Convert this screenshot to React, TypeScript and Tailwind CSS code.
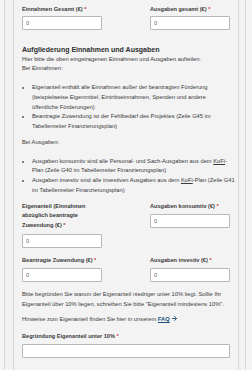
import { ArrowRight } from "lucide-react";

function Label({ children }: { children: React.ReactNode }) {
  return (
    <label className="block text-[5.6px] font-semibold leading-[9.6px] text-[#3a3a3a]">
      {children} <span className="text-[#c0392b]">*</span>
    </label>
  );
}

function Field({ value = "0", wide = false }: { value?: string; wide?: boolean }) {
  return (
    <input
      readOnly
      value={value}
      className={`block h-[14px] rounded-[1px] border border-[#b9b9b9] bg-white px-[3px] text-[5.6px] text-[#666] outline-none ${
        wide ? "w-full" : "w-[80px]"
      }`}
    />
  );
}

export default function App() {
  return (
    <div className="h-[370px] w-[252px] overflow-hidden bg-[#f4f4f4] font-['Liberation_Sans',Arial,sans-serif] text-[5.75px] leading-[9.75px] text-[#3a3a3a]">
      <div className="ml-[4px] h-full w-[242px] border-x border-[#d9d9d9] bg-[#f2f2f2] pl-[8px]">
        <div className="h-full w-[226px] border-x border-[#d6d6d6] bg-[#f3f3f3] px-[8px] pt-[5px]">
          <div className="grid grid-cols-2 gap-x-[48px]">
            <div>
              <Label>Einnahmen Gesamt (€)</Label>
              <div className="mt-[1px]">
                <Field />
              </div>
            </div>
            <div>
              <Label>Ausgaben gesamt (€)</Label>
              <div className="mt-[1px]">
                <Field />
              </div>
            </div>
          </div>

          <h3 className="mt-[15px] text-[7px] font-bold leading-[10px] text-[#2e2e2e]">
            Aufgliederung Einnahmen und Ausgaben
          </h3>
          <p>
            Hier bitte die oben eingetragenen Einnahmen und Ausgaben aufteilen.
            <br />
            Bei Einnahmen:
          </p>
          <ul className="mt-[9px] list-disc pl-[10px] marker:text-[#555]">
            <li>
              Eigenanteil enthält alle Einnahmen außer der beantragten Förderung (beispielweise Eigenmittel,
              Eintrittseinnahmen, Spenden und andere öffentliche Förderungen)
            </li>
            <li>
              Beantragte Zuwendung ist der Fehlbedarf des Projektes (Zeile G45 im Tabellenreiter Finanzierungsplan)
            </li>
          </ul>
          <p className="mt-[6px]">Bei Ausgaben:</p>
          <ul className="mt-[9px] list-disc pl-[10px] marker:text-[#555]">
            <li>
              Ausgaben konsumtiv sind alle Personal- und Sach-Ausgaben aus dem <span className="underline">KoFi</span>
              -Plan (Zeile G40 im Tabellenreiter Finanzierungsplan)
            </li>
            <li className="-mr-[8px]">
              Ausgaben investiv sind alle investiven Ausgaben aus dem <span className="underline">KoFi</span>-Plan
              (Zeile G41 im Tabellenreiter Finanzierungsplan)
            </li>
          </ul>

          <div className="mt-[6px] grid grid-cols-2 gap-x-[48px] gap-y-[8px]">
            <div className="flex flex-col">
              <Label>Eigenanteil (Einnahmen abzüglich beantragte Zuwendung (€)</Label>
              <div className="mt-[4px]">
                <Field />
              </div>
            </div>
            <div className="flex flex-col">
              <Label>Ausgaben konsumtiv (€)</Label>
              <div className="mt-[3px]">
                <Field />
              </div>
            </div>
            <div>
              <Label>Beantragte Zuwendung (€)</Label>
              <div className="mt-[2px]">
                <Field />
              </div>
            </div>
            <div>
              <Label>Ausgaben investiv (€)</Label>
              <div className="mt-[2px]">
                <Field />
              </div>
            </div>
          </div>

          <p className="mt-[8px]">
            Bitte begründen Sie warum der Eigenanteil niedriger unter 10% liegt. Sollte Ihr Eigenanteil über 10%
            liegen, schreiben Sie bitte "Eigenanteil mindestens 10%".
          </p>
          <p className="mt-[6px]">
            Hinweise zum Eigenanteil finden Sie hier in unserem{" "}
            <a className="font-semibold text-[#1d4f7a] underline">FAQ</a>{" "}
            <ArrowRight className="inline h-[7px] w-[7px] align-[-1px] text-[#1d4f7a]" strokeWidth={3} />
          </p>
          <div className="mt-[7px]">
            <Label>Begründung Eigenanteil unter 10%</Label>
            <div className="mt-[2px]">
              <Field value="" wide />
            </div>
          </div>
        </div>
      </div>
    </div>
  );
}
